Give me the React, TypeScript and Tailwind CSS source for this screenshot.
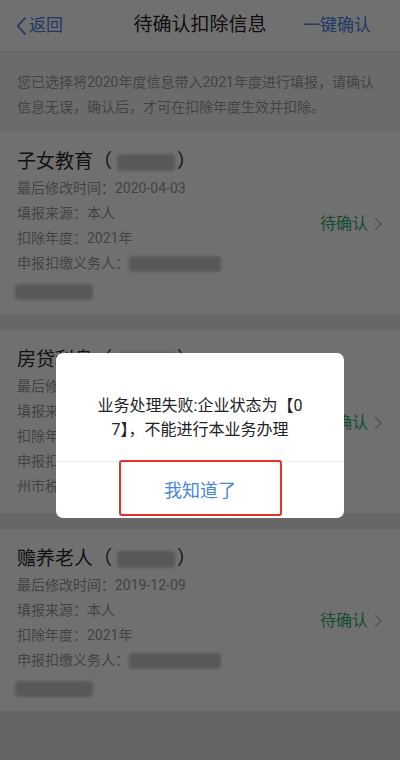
import React from "react";

type Item = {
  title: string;
  time: string;
  extra?: string;
};

const items: Item[] = [
  { title: "子女教育", time: "2020-04-03" },
  { title: "房贷利息", time: "2020-04-03", extra: "州市税务局" },
  { title: "赡养老人", time: "2019-12-09" },
];

function Blur({ w, h = 16 }: { w: number; h?: number }) {
  return (
    <span
      className="inline-block rounded-[4px] bg-[#c9c9c9] blur-[1.5px] align-middle"
      style={{ width: w, height: h }}
    />
  );
}

function Card({ item }: { item: Item }) {
  return (
    <div className="flex items-center bg-white pl-[17px] pr-[18px] pt-[16px] pb-[14px]">
      <div className="flex-1">
        <div className="flex items-center text-[19px] leading-[28px] text-[#2a2a2a]">
          <span>{item.title}</span>
          <span>（</span>
          <span className="ml-[5px] flex">
            <Blur w={58} h={17} />
          </span>
          <span className="ml-[2px]">）</span>
        </div>
        <div className="text-[14px] leading-[25px] text-[#9a9a9a]">
          <div>最后修改时间：{item.time}</div>
          <div>填报来源：本人</div>
          <div>扣除年度：2021年</div>
          <div className="flex items-center">
            <span>申报扣缴义务人：</span>
            <Blur w={92} />
          </div>
        </div>
        {item.extra ? (
          <div className="text-[14px] leading-[25px] text-[#9a9a9a]">{item.extra}</div>
        ) : (
          <div className="mt-[8px] -ml-[2px] flex">
            <Blur w={78} />
          </div>
        )}
      </div>
      <div className="flex items-center gap-[6px] text-[16px] text-[#2fae68]">
        <span>待确认</span>
        <svg width="8" height="14" viewBox="0 0 8 14" fill="none">
          <path d="M1 1l6 6-6 6" stroke="#bdbdbd" strokeWidth="1.4" />
        </svg>
      </div>
    </div>
  );
}

export default function App() {
  return (
    <div className="relative h-[760px] w-[400px] overflow-hidden bg-[#e6e6ea] font-['Roboto','Noto_Sans_CJK_SC',sans-serif]">
      {/* header */}
      <div className="grid h-[52px] grid-cols-[1fr_auto_1fr] items-center border-b border-[#e2e2e2] bg-white px-[16px]">
        <div className="flex items-center gap-[2px] text-[17px] text-[#4a82e6]">
          <svg width="11" height="20" viewBox="0 0 11 20" fill="none">
            <path d="M9.5 1.5L1.8 10l7.7 8.5" stroke="#4a82e6" strokeWidth="1.8" />
          </svg>
          <span>返回</span>
        </div>
        <div className="text-[19px] text-[#222]">待确认扣除信息</div>
        <div className="pr-[13px] text-right text-[17px] text-[#4a82e6]">一键确认</div>
      </div>

      {/* notice */}
      <div className="bg-[#f4f4f4] px-[17px] pt-[18px] pb-[12px] text-[14px] leading-[25px] text-[#9a9a9a]">
        您已选择将2020年度信息带入2021年度进行填报，请确认信息无误，确认后，才可在扣除年度生效并扣除。
      </div>

      {/* list */}
      <div className="flex flex-col gap-[16px] bg-[#ebebeb]">
        {items.map((it) => (
          <Card key={it.title} item={it} />
        ))}
      </div>

      {/* mask + dialog */}
      <div className="absolute inset-0 flex flex-col items-center bg-black/[0.56] pt-[353px]">
        <div className="w-[288px] rounded-[7px] bg-white">
          <div className="px-[20px] pt-[41px] pb-[19px] text-center text-[16px] leading-[24px] text-[#222]">
            业务处理失败:企业状态为【0
            <br />
            7】，不能进行本业务办理
          </div>
          <div className="relative flex h-[57px] items-center justify-center border-t border-[#eeeeee] text-[18px] text-[#4a86d8]">
            我知道了
            <div className="absolute left-[63px] top-[-2px] h-[56px] w-[163px] rounded-[3px] border-[2.5px] border-[#ea2f2a]" />
          </div>
        </div>
      </div>
    </div>
  );
}
